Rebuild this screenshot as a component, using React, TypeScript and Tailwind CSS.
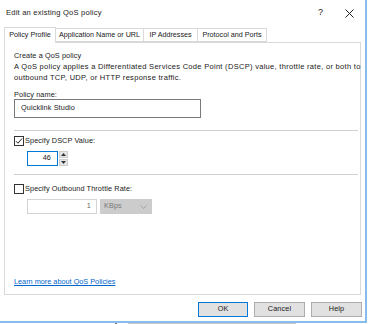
import React from "react";

function Check() {
  return (
    <div className="w-[10px] h-[10px] border border-[#333] bg-white flex items-center justify-center">
      <svg width="8" height="8" viewBox="0 0 8 8">
        <path d="M1 4.2 L3 6.2 L7 1.5" stroke="#222" strokeWidth="1" fill="none" />
      </svg>
    </div>
  );
}

export default function App() {
  const font = { fontFamily: '"Liberation Sans", Arial, sans-serif' };
  return (
    <div className="w-[368px] h-[324px] bg-white overflow-hidden flex flex-col text-[7.3px] tracking-[0.1px] text-[#1a1a1a]" style={font}>
      <div className="w-[367px] h-[323px] border-r-2 border-b-2 border-[#86bdec] flex flex-col">
        {/* title bar */}
        <div className="h-[26px] flex items-start pt-[8px] pl-[6px] pr-[11px]">
          <span className="text-[7.6px] tracking-[0.2px] leading-[9px]">Edit an existing QoS policy</span>
          <span className="ml-auto mr-[22px] text-[9px] leading-[9px]">?</span>
          <svg width="9" height="9" viewBox="0 0 9 9" className="mt-[1px]">
            <path d="M0.5 0.5 L8.5 8.5 M8.5 0.5 L0.5 8.5" stroke="#222" strokeWidth="1" />
          </svg>
        </div>
        {/* tabs */}
        <div className="flex ml-[4px] h-[16px] items-end tracking-normal text-[7.2px]">
          <div className="h-[16px] w-[52px] border border-b-0 border-[#d9d9d9] bg-white flex items-center justify-center z-10 -mb-[1px] pb-[1px]">Policy Profile</div>
          <div className="h-[14px] w-[88px] border border-l-0 border-[#d9d9d9] bg-white flex items-center justify-center">Application Name or URL</div>
          <div className="h-[14px] w-[54px] border border-l-0 border-[#d9d9d9] bg-white flex items-center justify-center">IP Addresses</div>
          <div className="h-[14px] w-[69px] border border-l-0 border-[#d9d9d9] bg-white flex items-center justify-center">Protocol and Ports</div>
        </div>
        {/* panel */}
        <div className="ml-[4px] w-[357px] h-[253px] border border-[#d9d9d9] flex flex-col pl-[9px] pr-[4px] pt-[9px]">
          <div className="leading-[8px]">Create a QoS policy</div>
          <div className="mt-[1px] leading-[11px] whitespace-nowrap text-[7.5px] tracking-[0.3px]">
            A QoS policy applies a Differentiated Services Code Point (DSCP) value, throttle rate, or both to
            <br />
            outbound TCP, UDP, or HTTP response traffic.
          </div>
          <div className="mt-[8px] leading-[8px]">Policy name:</div>
          <div className="mt-0 w-[187px] h-[19px] border border-[#7a7a7a] flex items-center pl-[6px]">Quicklink Studio</div>
          <div className="mt-[12px] h-px w-[344px] bg-[#d0d0d0]" />
          <div className="mt-[5px] flex items-center gap-[1px] leading-[10px]">
            <Check />
            <span>Specify DSCP Value:</span>
          </div>
          <div className="mt-[5px] ml-[13px] flex">
            <div className="w-[31px] h-[15px] border border-[#0078d7] flex items-center justify-end pr-[6px]">46</div>
            <div className="w-[9px] h-[15px] flex flex-col gap-px ml-[1px]">
              <div className="h-[7px] bg-[#e6e6e6] border border-[#cfcfcf] flex items-center justify-center">
                <svg width="5" height="3" viewBox="0 0 5 3"><path d="M0 3 L2.5 0 L5 3Z" fill="#333" /></svg>
              </div>
              <div className="h-[7px] bg-[#e6e6e6] border border-[#cfcfcf] flex items-center justify-center">
                <svg width="5" height="3" viewBox="0 0 5 3"><path d="M0 0 L2.5 3 L5 0Z" fill="#333" /></svg>
              </div>
            </div>
          </div>
          <div className="mt-[8px] h-px w-[344px] bg-[#d0d0d0]" />
          <div className="mt-[9px] flex items-center gap-[1px] leading-[10px]">
            <div className="w-[10px] h-[10px] border border-[#333] bg-white" />
            <span>Specify Outbound Throttle Rate:</span>
          </div>
          <div className="mt-[5px] ml-[13px] flex gap-[3px]">
            <div className="w-[70px] h-[15px] border border-[#d4d4d4] flex items-center justify-end pr-[5px] text-[#6d6d6d]">1</div>
            <div className="w-[52px] h-[15px] bg-[#cccccc] border border-[#cccccc] flex items-center pl-[3px] text-[#7a7a7a]">
              KBps
              <svg width="7" height="4" viewBox="0 0 7 4" className="ml-auto mr-[4px]">
                <path d="M0.5 0.5 L3.5 3.5 L6.5 0.5" stroke="#9a9a9a" strokeWidth="0.8" fill="none" />
              </svg>
            </div>
          </div>
          <div className="mt-auto mb-[8px] text-[#0066cc] underline leading-[8px] tracking-normal">Learn more about QoS Policies</div>
        </div>
        {/* buttons */}
        <div className="flex justify-end gap-[6px] mt-[7px] pr-[3px]">
          <div className="w-[50px] h-[15px] border border-[#0078d7] bg-[#e1e1e1] flex items-center justify-center">OK</div>
          <div className="w-[51px] h-[15px] border border-[#adadad] bg-[#e1e1e1] flex items-center justify-center">Cancel</div>
          <div className="w-[51px] h-[15px] border border-[#adadad] bg-[#e1e1e1] flex items-center justify-center">Help</div>
        </div>
      </div>
      <div className="flex h-[1px] items-start">
        <div className="ml-[115px] w-[2px] h-[1px] bg-[#777]" />
        <div className="ml-[11px] w-[168px] h-[1px] bg-[#c8c8c8]" />
      </div>
    </div>
  );
}
